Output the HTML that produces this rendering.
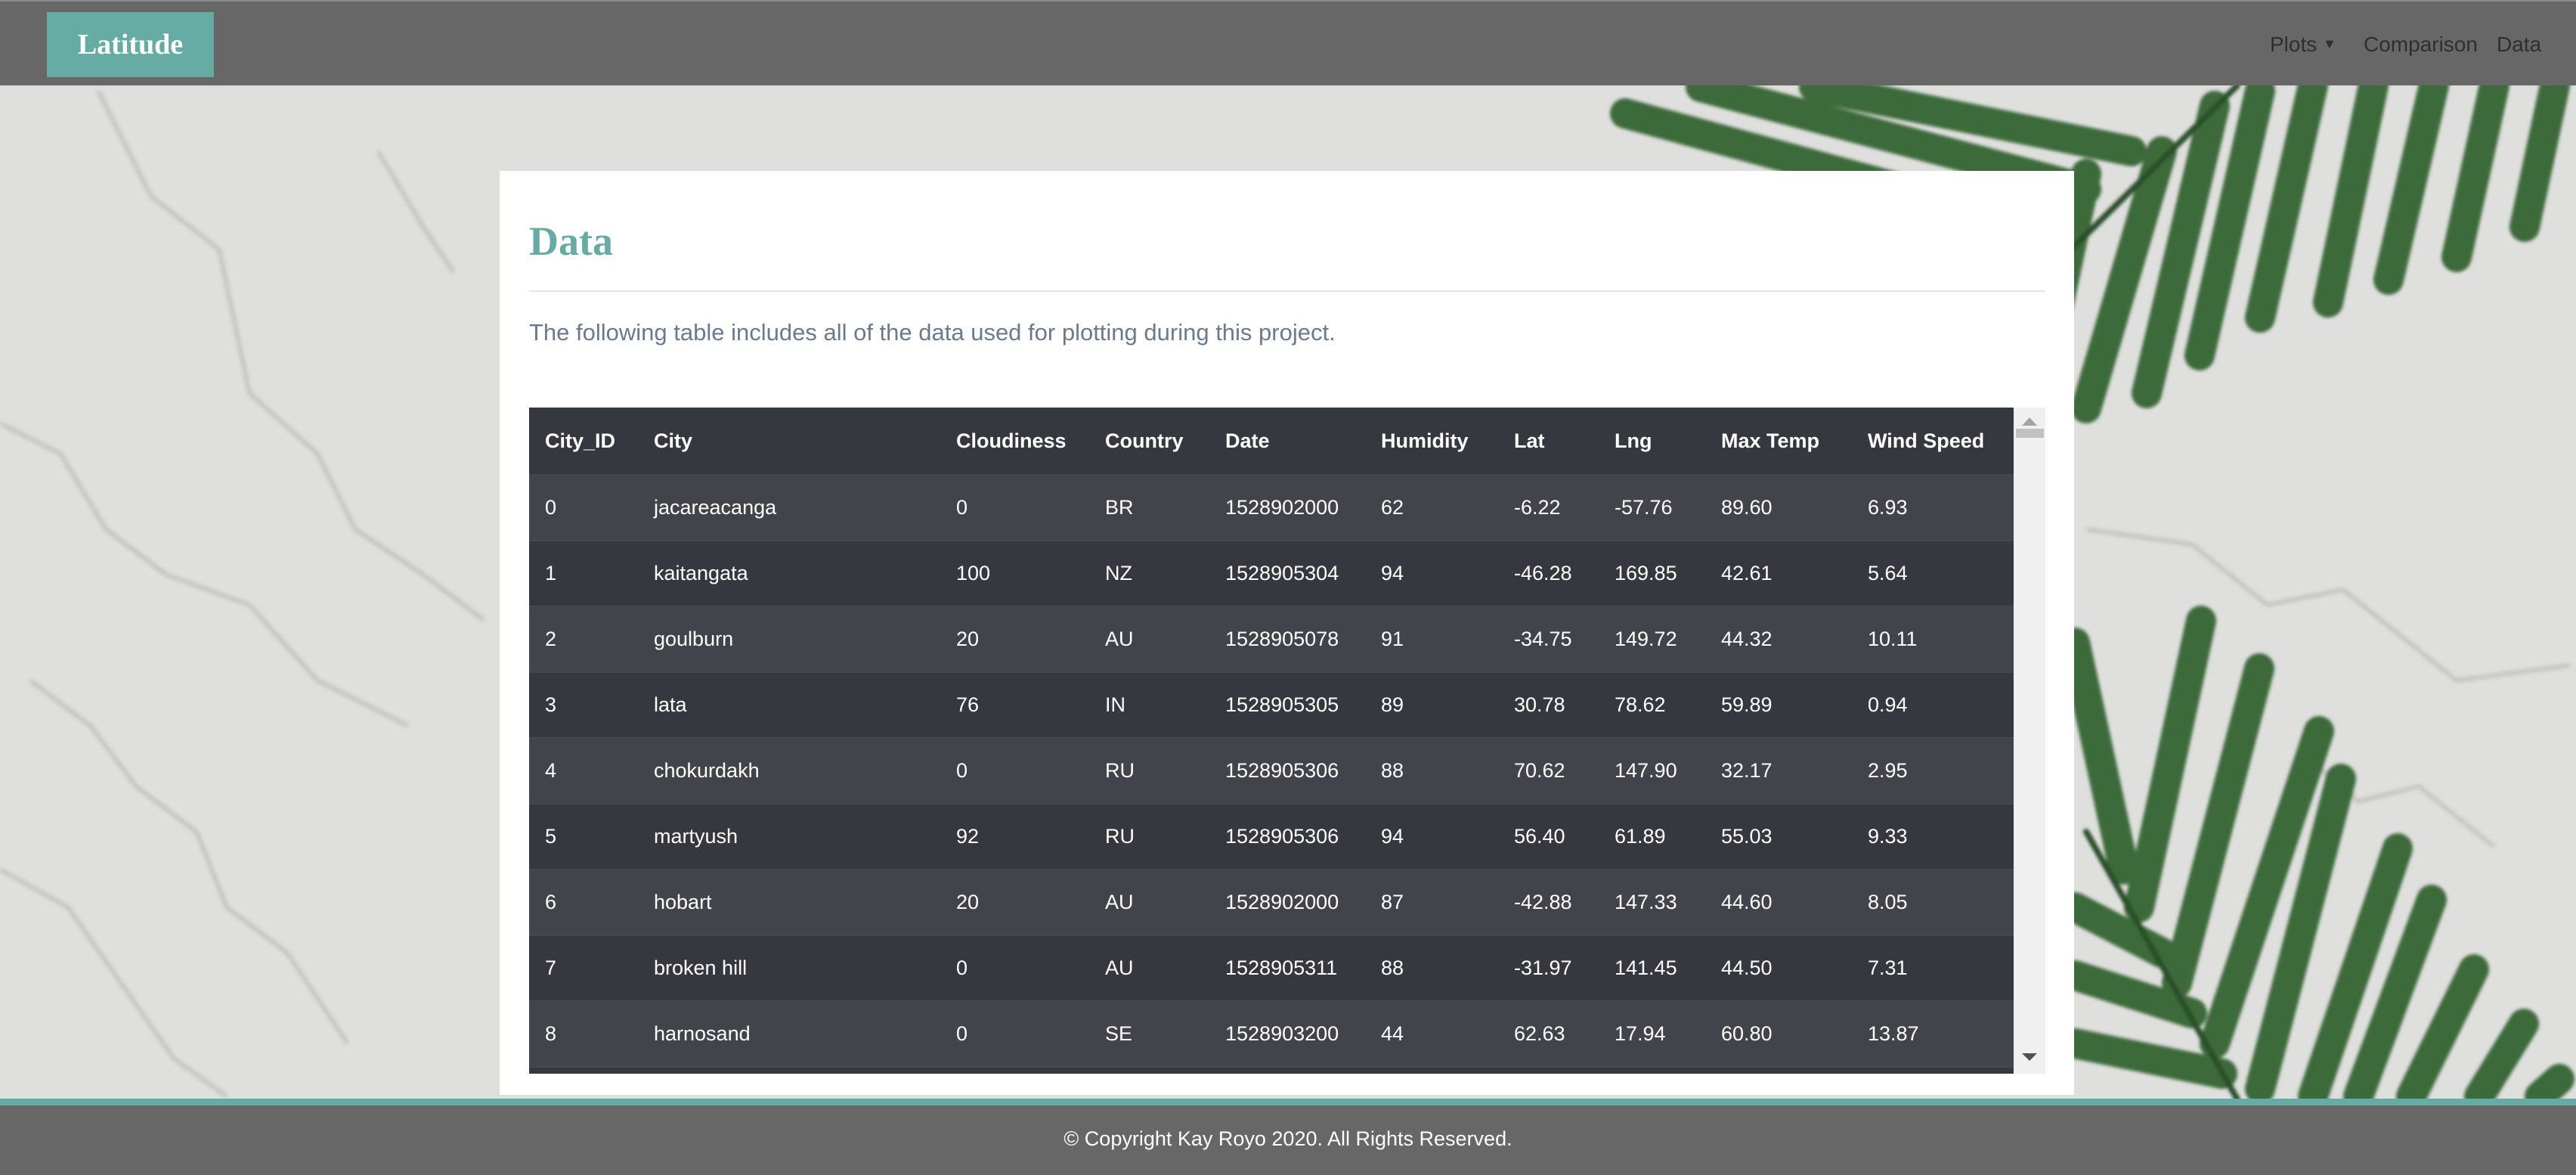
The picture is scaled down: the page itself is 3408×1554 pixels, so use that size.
<!DOCTYPE html>
<html><head><meta charset="utf-8"><style>
*{margin:0;padding:0;box-sizing:border-box}
body{width:3408px;height:1554px;position:relative;overflow:hidden;background:#dededd;font-family:"Liberation Sans",sans-serif}
#bg{position:absolute;left:0;top:0}
.nav{position:absolute;left:0;top:0;width:3408px;height:113px;background:#676767;border-top:2px solid #8a8a8a}
.brand{position:absolute;left:62px;top:14px;width:221px;height:86px;background:#66aca4;color:#fff;font-family:"Liberation Serif",serif;font-weight:bold;font-size:38px;line-height:86px;text-align:center}
.links{position:absolute;top:41px;font-size:28px;color:#2f2f2f}
.card{position:absolute;left:661px;top:226px;width:2083px;height:1222px;background:#fff}
h1{position:absolute;left:39px;top:62px;font-family:"Liberation Serif",serif;font-size:54px;color:#66aca4;font-weight:bold}
.hr{position:absolute;left:39px;top:158px;width:2006px;height:2px;background:#e5e5e5}
p{position:absolute;left:39px;top:196px;font-size:31px;color:#6b7a90}
.tw{position:absolute;left:39px;top:313px;width:1964px;height:881px;overflow:hidden;background:#35383f}
table{border-collapse:collapse;width:1964px;color:#fff;font-size:27px}
td,th{text-align:left;height:87px;padding:0 0 0 21px;border-top:2px solid #45484f;white-space:nowrap}
th{height:89px;border-top:none;background:#35383f}
tr:nth-child(even) td{background:#41444b}
tr:nth-child(odd) td{background:#35383f}
.sb{position:absolute;left:2003px;top:313px;width:42px;height:881px;background:#f0f0f0}
.foot{position:absolute;left:0;top:1453px;width:3408px;height:101px;background:#676767;border-top:9px solid #66aca4;color:#fff;font-size:27px;text-align:center;line-height:88px}
</style></head><body>
<svg id="bg" width="3408" height="1554" viewBox="0 0 3408 1554">
<defs><filter id="b"><feGaussianBlur stdDeviation="3"/></filter><filter id="b2"><feGaussianBlur stdDeviation="2"/></filter></defs>
<rect width="3408" height="1554" fill="#dfdfde"/>
<g fill="none" stroke="#8f978d" stroke-width="4" opacity=".5" filter="url(#b)">
<path d="M130 120 L200 260 L290 330 L330 520 L420 600 L470 700 L560 760 L640 820"/>
<path d="M0 560 L80 600 L140 700 L220 760 L330 800 L420 900 L540 960"/>
<path d="M40 900 L120 960 L180 1040 L260 1100 L300 1200 L380 1260 L460 1380"/>
<path d="M0 1150 L90 1200 L160 1300 L230 1400 L300 1450"/>
<path d="M500 200 L560 300 L600 360"/>
<path d="M2760 700 L2900 720 L3000 800 L3100 780 L3250 900 L3400 880"/>
<path d="M3050 1000 L3120 1060 L3200 1040 L3300 1120"/>
</g>
<g stroke-linecap="round" filter="url(#b2)">
<g stroke="#3d6b3a" stroke-width="40">
<line x1="2150" y1="150" x2="2700" y2="300"/>
<line x1="2250" y1="115" x2="2760" y2="250"/>
<line x1="2400" y1="115" x2="2820" y2="200"/>
<line x1="2760" y1="230" x2="2690" y2="560"/>
<line x1="2860" y1="200" x2="2760" y2="540"/>
<line x1="2930" y1="140" x2="2840" y2="520"/>
<line x1="2990" y1="120" x2="2910" y2="470"/>
<line x1="3060" y1="113" x2="2990" y2="420"/>
<line x1="3140" y1="113" x2="3080" y2="400"/>
<line x1="3220" y1="113" x2="3160" y2="370"/>
<line x1="3300" y1="113" x2="3250" y2="340"/>
<line x1="3380" y1="113" x2="3340" y2="300"/>
<line x1="2912" y1="821" x2="2830" y2="1200"/>
<line x1="2989" y1="884" x2="2880" y2="1300"/>
<line x1="3068" y1="967" x2="2930" y2="1380"/>
<line x1="3097" y1="1030" x2="2990" y2="1440"/>
<line x1="3172" y1="1122" x2="3060" y2="1450"/>
<line x1="3217" y1="1190" x2="3120" y2="1450"/>
<line x1="3273" y1="1282" x2="3190" y2="1450"/>
<line x1="3339" y1="1354" x2="3280" y2="1450"/>
<line x1="3386" y1="1427" x2="3360" y2="1450"/>
<line x1="2745" y1="850" x2="2810" y2="1150"/>
<line x1="2745" y1="1200" x2="2860" y2="1260"/>
<line x1="2745" y1="1290" x2="2900" y2="1340"/>
<line x1="2745" y1="1380" x2="2940" y2="1420"/>
</g>
<g stroke="#2a4f29" stroke-width="8">
<line x1="2740" y1="330" x2="2960" y2="113"/>
<line x1="2760" y1="1100" x2="2960" y2="1454"/>
</g>
</g>
</svg>
<div class="nav"><div class="brand">Latitude</div>
<div class="links" style="left:3003px">Plots <span style="font-size:18px;position:relative;top:-4px">▼</span></div>
<div class="links" style="left:3127px">Comparison</div>
<div class="links" style="left:3303px">Data</div></div>
<div class="card">
<h1>Data</h1><div class="hr"></div>
<p>The following table includes all of the data used for plotting during this project.</p>
<div class="tw"><table>
<colgroup><col style="width:144px"><col style="width:400px"><col style="width:197px"><col style="width:159px"><col style="width:206px"><col style="width:176px"><col style="width:133px"><col style="width:141px"><col style="width:194px"><col></colgroup>
<tr><th>City_ID</th><th>City</th><th>Cloudiness</th><th>Country</th><th>Date</th><th>Humidity</th><th>Lat</th><th>Lng</th><th>Max Temp</th><th>Wind Speed</th></tr>
<tr><td>0</td><td>jacareacanga</td><td>0</td><td>BR</td><td>1528902000</td><td>62</td><td>-6.22</td><td>-57.76</td><td>89.60</td><td>6.93</td></tr>
<tr><td>1</td><td>kaitangata</td><td>100</td><td>NZ</td><td>1528905304</td><td>94</td><td>-46.28</td><td>169.85</td><td>42.61</td><td>5.64</td></tr>
<tr><td>2</td><td>goulburn</td><td>20</td><td>AU</td><td>1528905078</td><td>91</td><td>-34.75</td><td>149.72</td><td>44.32</td><td>10.11</td></tr>
<tr><td>3</td><td>lata</td><td>76</td><td>IN</td><td>1528905305</td><td>89</td><td>30.78</td><td>78.62</td><td>59.89</td><td>0.94</td></tr>
<tr><td>4</td><td>chokurdakh</td><td>0</td><td>RU</td><td>1528905306</td><td>88</td><td>70.62</td><td>147.90</td><td>32.17</td><td>2.95</td></tr>
<tr><td>5</td><td>martyush</td><td>92</td><td>RU</td><td>1528905306</td><td>94</td><td>56.40</td><td>61.89</td><td>55.03</td><td>9.33</td></tr>
<tr><td>6</td><td>hobart</td><td>20</td><td>AU</td><td>1528902000</td><td>87</td><td>-42.88</td><td>147.33</td><td>44.60</td><td>8.05</td></tr>
<tr><td>7</td><td>broken hill</td><td>0</td><td>AU</td><td>1528905311</td><td>88</td><td>-31.97</td><td>141.45</td><td>44.50</td><td>7.31</td></tr>
<tr><td>8</td><td>harnosand</td><td>0</td><td>SE</td><td>1528903200</td><td>44</td><td>62.63</td><td>17.94</td><td>60.80</td><td>13.87</td></tr>
<tr><td>9</td><td>ushuaia</td><td>40</td><td>AR</td><td>1528902000</td><td>80</td><td>-54.81</td><td>-68.31</td><td>35.60</td><td>4.70</td></tr>
</table></div>
<div class="sb">
<svg width="42" height="881" style="position:absolute;left:0;top:0"><path d="M11 24 L31 24 L21 13Z" fill="#a3a3a3"/><rect x="3" y="28" width="37" height="12" fill="#c1c1c1"/><path d="M11 854 L31 854 L21 864Z" fill="#505050"/></svg>
</div>
</div>
<div class="foot">© Copyright Kay Royo 2020. All Rights Reserved.</div>
</body></html>
